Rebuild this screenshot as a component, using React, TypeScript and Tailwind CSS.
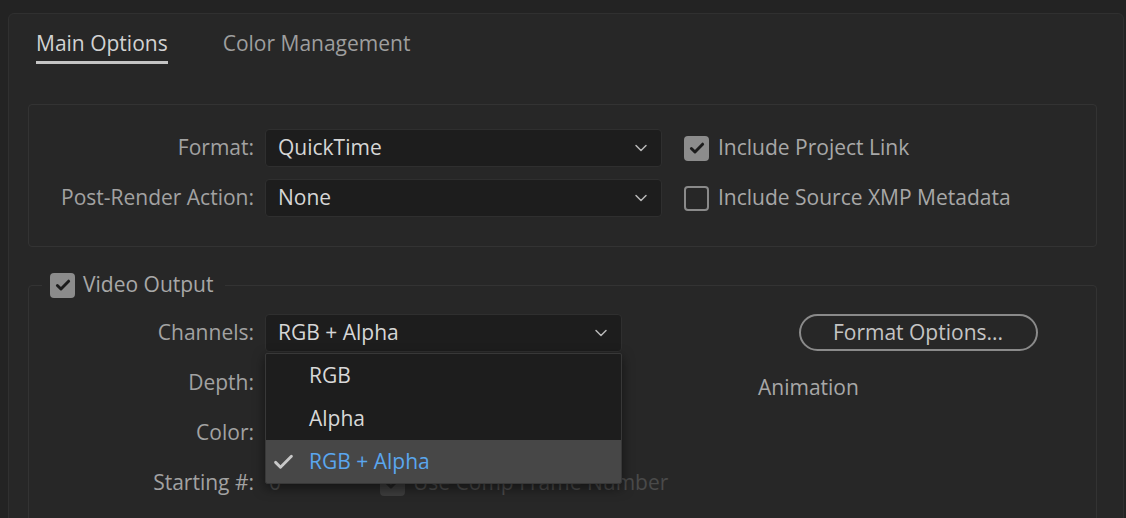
import { ChevronDown } from 'lucide-react';

const font = { fontFamily: '"Open Sans", "Noto Sans", sans-serif' };

function CheckBox({ checked, dim }: { checked?: boolean; dim?: boolean }) {
  if (!checked) {
    return <span className="block h-[25px] w-[25px] shrink-0 rounded-[4px] border-2 border-[#8a8a8a]" />;
  }
  return (
    <span
      className={`flex h-[25px] w-[25px] shrink-0 items-center justify-center rounded-[4px] ${
        dim ? 'bg-[#3c3c3c]' : 'bg-[#8c8c8c]'
      }`}
    >
      <svg viewBox="0 0 16 16" className="h-[18px] w-[18px]">
        <path
          d="M3 8.4l3.2 3.2L13 4.6"
          fill="none"
          stroke={dim ? '#232323' : '#1c1c1c'}
          strokeWidth="2.6"
          strokeLinecap="round"
          strokeLinejoin="round"
        />
      </svg>
    </span>
  );
}

function Select({ value, width }: { value: string; width: string }) {
  return (
    <div
      className={`flex h-[38px] ${width} items-center justify-between rounded-[4px] border border-[#2f2f2f] bg-[#1d1d1d] pl-[12px] pr-[10px] text-[21px] text-[#d6d6d6]`}
    >
      <span>{value}</span>
      <ChevronDown className="h-[20px] w-[20px] text-[#b8b8b8]" strokeWidth={1.8} />
    </div>
  );
}

function Label({ children }: { children: string }) {
  return <span className="w-[236px] shrink-0 pr-[11px] text-right text-[21px] text-[#a2a2a2]">{children}</span>;
}

export default function App() {
  return (
    <div className="h-[518px] w-[1126px] overflow-hidden bg-[#232323] pl-[8px] pr-[2px] pt-[13px]" style={font}>
      <div className="h-[600px] rounded-[6px] border border-[#303030] bg-[#272727] pl-[19px] pr-[26px]">
        {/* Tabs */}
        <div className="flex gap-[55px] pl-[8px] pt-[14px]">
          <div className="flex flex-col">
            <span className="text-[21px] leading-[30px] text-[#d2d2d2]">Main Options</span>
            <span className="mt-[3px] h-[3px] w-full bg-[#c4c4c4]" />
          </div>
          <span className="text-[21px] leading-[30px] text-[#9e9e9e]">Color Management</span>
        </div>

        {/* Output settings box */}
        <div className="mt-[40px] flex flex-col gap-[12px] rounded-[4px] border border-[#333333] pb-[29px] pt-[24px]">
          <div className="flex items-center">
            <Label>Format:</Label>
            <Select value="QuickTime" width="w-[397px]" />
            <div className="ml-[22px] flex items-center gap-[9px]">
              <CheckBox checked />
              <span className="text-[21px] text-[#a8a8a8]">Include Project Link</span>
            </div>
          </div>
          <div className="flex items-center">
            <Label>Post-Render Action:</Label>
            <Select value="None" width="w-[397px]" />
            <div className="ml-[22px] flex items-center gap-[9px]">
              <CheckBox />
              <span className="text-[21px] text-[#a8a8a8]">Include Source XMP Metadata</span>
            </div>
          </div>
        </div>

        {/* Video Output group */}
        <fieldset className="mt-[25px] h-[300px] w-full min-w-0 rounded-[4px] border border-[#333333]">
          <legend className="ml-[13px] flex h-[26px] items-center gap-[8px] pl-[8px] pr-[12px]">
            <CheckBox checked />
            <span className="text-[21px] text-[#a8a8a8]">Video Output</span>
          </legend>
          <div className="flex pt-[16px]">
            <div className="relative flex w-[593px] shrink-0 flex-col gap-[12px]">
              <div className="flex items-center">
                <Label>Channels:</Label>
                <Select value="RGB + Alpha" width="w-[357px]" />
              </div>
              <div className="flex h-[38px] items-center">
                <Label>Depth:</Label>
              </div>
              <div className="flex h-[38px] items-center">
                <Label>Color:</Label>
              </div>
              <div className="flex h-[38px] items-center">
                <Label>Starting #:</Label>
                <span className="w-[115px] shrink-0 pl-[4px] text-[21px] text-[#4e4e4e]">0</span>
                <div className="flex items-center gap-[8px]">
                  <CheckBox checked dim />
                  <span className="whitespace-nowrap text-[21px] text-[#4a4a4a]">Use Comp Frame Number</span>
                </div>
              </div>

              {/* Open channels menu */}
              <div className="absolute left-[236px] top-[39px] w-[357px] overflow-hidden rounded-[2px] border border-[#383838] bg-[#1d1d1d] shadow-[0_4px_12px_rgba(0,0,0,0.5)]">
                <div className="flex h-[43px] items-center pl-[43px] text-[21px] text-[#d8d8d8]">RGB</div>
                <div className="flex h-[43px] items-center pl-[43px] text-[21px] text-[#d8d8d8]">Alpha</div>
                <div className="flex h-[43px] items-center bg-[#474747] pl-[6px] text-[21px] text-[#5aa6ee]">
                  <svg viewBox="0 0 16 16" className="mr-[14px] h-[23px] w-[23px]">
                    <path
                      d="M2.5 8.6l3.4 3.4L13.5 4.4"
                      fill="none"
                      stroke="#c8c8c8"
                      strokeWidth="2"
                      strokeLinecap="round"
                      strokeLinejoin="round"
                    />
                  </svg>
                  RGB + Alpha
                </div>
              </div>
            </div>

            <div className="ml-[136px] flex w-[320px] flex-col">
              <button className="self-center h-[37px] w-[239px] rounded-full border-2 border-[#8a8a8a] text-[21px] text-[#c4c4c4]">
                Format Options...
              </button>
              <span className="mt-[21px] text-[21px] text-[#a8a8a8]">Animation</span>
            </div>
          </div>
        </fieldset>
      </div>
    </div>
  );
}
